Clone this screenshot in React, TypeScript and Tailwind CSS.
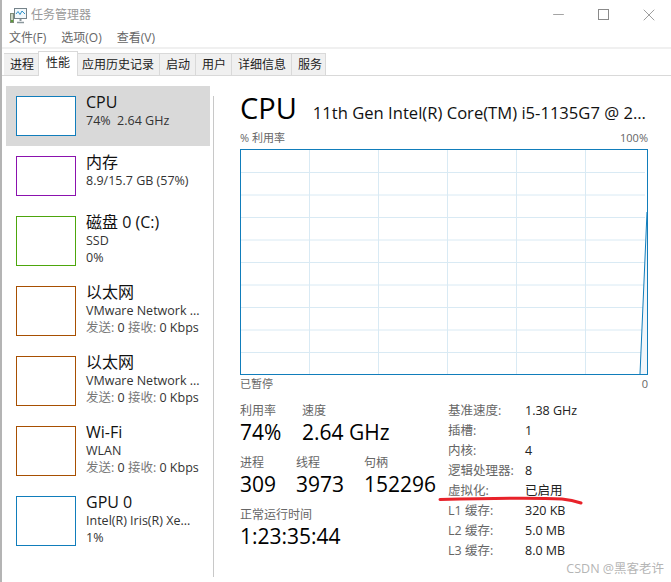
import type { ReactNode } from 'react';
import { Minus, X } from 'lucide-react';

const font = { fontFamily: '"Open Sans", "Noto Sans CJK SC", sans-serif' };

const tabs = ['进程', '性能', '应用历史记录', '启动', '用户', '详细信息', '服务'];

const Net = () => (
  <>
    <span className="text-[#777]">发送: </span>0 <span className="text-[#777]">接收: </span>0 Kbps
  </>
);

type Item = {
  name: string;
  lines: ReactNode[];
  color: string;
  tall: boolean;
  selected?: boolean;
};

const items: Item[] = [
  { name: 'CPU', lines: ['74%  2.64 GHz'], color: 'border-[#117dbb]', tall: false, selected: true },
  { name: '内存', lines: ['8.9/15.7 GB (57%)'], color: 'border-[#8b12ae]', tall: false },
  { name: '磁盘 0 (C:)', lines: ['SSD', '0%'], color: 'border-[#4da60c]', tall: true },
  { name: '以太网', lines: ['VMware Network ...', <Net />], color: 'border-[#a74f01]', tall: true },
  { name: '以太网', lines: ['VMware Network ...', <Net />], color: 'border-[#a74f01]', tall: true },
  { name: 'Wi-Fi', lines: ['WLAN', <Net />], color: 'border-[#a74f01]', tall: true },
  { name: 'GPU 0', lines: ['Intel(R) Iris(R) Xe...', '1%'], color: 'border-[#117dbb]', tall: true },
];

const specs = [
  ['基准速度:', '1.38 GHz'],
  ['插槽:', '1'],
  ['内核:', '4'],
  ['逻辑处理器:', '8'],
  ['虚拟化:', '已启用'],
  ['L1 缓存:', '320 KB'],
  ['L2 缓存:', '5.0 MB'],
  ['L3 缓存:', '8.0 MB'],
];

function AppIcon() {
  return (
    <svg width="17" height="16" viewBox="0 0 17 16" className="shrink-0 mt-[3px]">
      <rect x="0.5" y="5.5" width="3" height="9" fill="#c9d2c4" stroke="#7f8c78" />
      <rect x="1" y="12" width="2" height="2" fill="#5c9a3c" />
      <rect x="4.5" y="0.5" width="12" height="10" fill="#f2f8fb" stroke="#76838a" />
      <path d="M6 6l2-2.5 2 3 2-3.5 3 3" fill="none" stroke="#2f93cc" strokeWidth="1" />
      <path d="M10.5 11v2" stroke="#8b979c" strokeWidth="2" />
      <path d="M7 14.5h7" stroke="#8b979c" strokeWidth="1.5" />
    </svg>
  );
}

function Sidebar() {
  return (
    <div className="w-[212px] shrink-0 pl-[4px] pt-[10px] relative">
      <div className="w-[204px] flex flex-col">
        {items.map((it, i) => (
          <div key={i} className={`flex pl-[10px] pt-[10px] ${it.tall ? 'h-[70px]' : 'h-[60px]'} ${it.selected ? 'bg-[#d9d9d9]' : ''}`}>
            <div className={`w-[60px] border bg-white ${it.color} ${it.tall ? 'h-[50px]' : 'h-[40px]'}`} />
            <div className="ml-[10px] -mt-[5px] min-w-0">
              <div className="text-[16px] leading-[22px] text-[#111]">{it.name}</div>
              {it.lines.map((l, j) => (
                <div key={j} className="text-[12.5px] leading-[16.5px] whitespace-pre text-[#333]">
                  {l}
                </div>
              ))}
            </div>
          </div>
        ))}
      </div>
      <div className="absolute right-0 top-[20px] bottom-[5px] w-px bg-[#c8c8c8]" />
    </div>
  );
}

function Graph() {
  const xs = [69, 138, 207, 276, 345];
  const ys = [22.5, 45, 67.5, 90, 112.5, 135, 157.5, 180, 202.5];
  return (
    <div className="h-[226px] w-[408px] border border-[#117dbb] bg-white">
      <svg width="406" height="224" viewBox="0 0 406 224" className="block">
        {xs.map(x => (
          <line key={x} x1={x - 0.5} x2={x - 0.5} y1="0" y2="224" stroke="#d9eaf4" />
        ))}
        {ys.map(y => (
          <line key={y} x1="0" x2="404" y1={y} y2={y} stroke="#d9eaf4" />
        ))}
        <path d="M399 224 L406 62 L406 224 Z" fill="#f1f6fa" />
        <path d="M399 224 L406 62" fill="none" stroke="#117dbb" />
      </svg>
    </div>
  );
}

function Stat({ label, value, className }: { label: string; value: string; className: string }) {
  return (
    <div className={className}>
      <div className="text-[12px] leading-[16px] text-[#666]">{label}</div>
      <div className="text-[21px] leading-[26px] text-black whitespace-nowrap">{value}</div>
    </div>
  );
}

function Detail() {
  return (
    <div className="flex-1 min-w-0 pl-[26px] pt-[13px]">
      <div className="flex items-baseline h-[38px]">
        <span className="text-[29px] leading-[38px] text-black">CPU</span>
        <span className="ml-[16px] text-[16.6px] text-[#111] whitespace-nowrap">11th Gen Intel(R) Core(TM) i5-1135G7 @ 2...</span>
      </div>
      <div className="flex justify-between w-[408px] text-[11px] leading-[16px] text-[#666] mt-[3px] mb-[3px]">
        <span>% 利用率</span>
        <span>100%</span>
      </div>
      <Graph />
      <div className="flex justify-between w-[408px] text-[11px] leading-[16px] text-[#666] mt-[1px]">
        <span>已暂停</span>
        <span>0</span>
      </div>
      <div className="flex mt-[11px]">
        <div className="w-[208px]">
          <div className="flex">
            <Stat label="利用率" value="74%" className="w-[62px]" />
            <Stat label="速度" value="2.64 GHz" className="" />
          </div>
          <div className="flex mt-[10px]">
            <Stat label="进程" value="309" className="w-[56px]" />
            <Stat label="线程" value="3973" className="w-[68px]" />
            <Stat label="句柄" value="152296" className="" />
          </div>
          <Stat label="正常运行时间" value="1:23:35:44" className="mt-[10px]" />
        </div>
        <div className="grid grid-cols-[77px_auto] content-start -mt-[2px] text-[12.5px] leading-[20px]">
          {specs.map(([k, v]) => (
            <div key={k} className="contents">
              <span className="text-[#666] whitespace-nowrap">{k}</span>
              <span className="text-[#222] whitespace-nowrap">{v}</span>
            </div>
          ))}
        </div>
      </div>
    </div>
  );
}

export default function App() {
  return (
    <div className="relative flex flex-col w-[671px] h-[582px] overflow-hidden bg-white border-l-2 border-[#b4b4b4]" style={font}>
      {/* Title bar */}
      <div className="flex items-center h-[29px] pl-[8px]">
        <AppIcon />
        <span className="ml-[4px] text-[12px] text-[#999]">任务管理器</span>
        <div className="ml-auto flex items-center text-[#8a8a8a]">
          <Minus size={17} strokeWidth={1.1} />
          <div className="ml-[31px] w-[11px] h-[11px] border border-[#8a8a8a]" />
          <X size={20} strokeWidth={1} className="ml-[30px] mr-[12px]" />
        </div>
      </div>
      {/* Menu */}
      <div className="flex h-[18px] items-center pl-[7px] gap-[15px] text-[12px] text-[#666]">
        <span>文件(F)</span>
        <span>选项(O)</span>
        <span>查看(V)</span>
      </div>
      {/* Tabs */}
      <div className="h-[29px] bg-white border-t-2 border-[#f0f0f0] border-b border-b-[#d9d9d9] flex items-end pl-[2px]">
        {tabs.map(t => (
          <div
            key={t}
            className={
              t === '性能'
                ? 'relative z-10 h-[25px] -mb-px -ml-[2px] -mr-[2px] px-[7px] bg-white border border-b-0 border-[#d9d9d9] text-[12px] leading-[21px] text-[#222]'
                : `h-[22px] pl-[6px] ${t === '服务' ? 'pr-[3px]' : 'pr-[5px]'} bg-[#f0f0f0] border-t border-r border-[#d9d9d9] text-[12px] leading-[21px] text-[#222]`
            }
          >
            {t}
          </div>
        ))}
      </div>
      <div className="flex flex-1 min-h-0">
        <Sidebar />
        <Detail />
      </div>
      {/* Red pen mark */}
      <svg className="absolute left-0 top-0 pointer-events-none" width="669" height="582">
        <path d="M438 499.5 C 480 498.5, 540 498, 560 499 C 570 500, 576 502, 579 503" fill="none" stroke="#e8222a" strokeWidth="3" strokeLinecap="round" />
      </svg>
      {/* Watermark */}
      <div className="absolute right-[7px] bottom-[5px] text-[12.5px] leading-[16px] text-[#b5b5b5]">CSDN @黑客老许</div>
    </div>
  );
}
